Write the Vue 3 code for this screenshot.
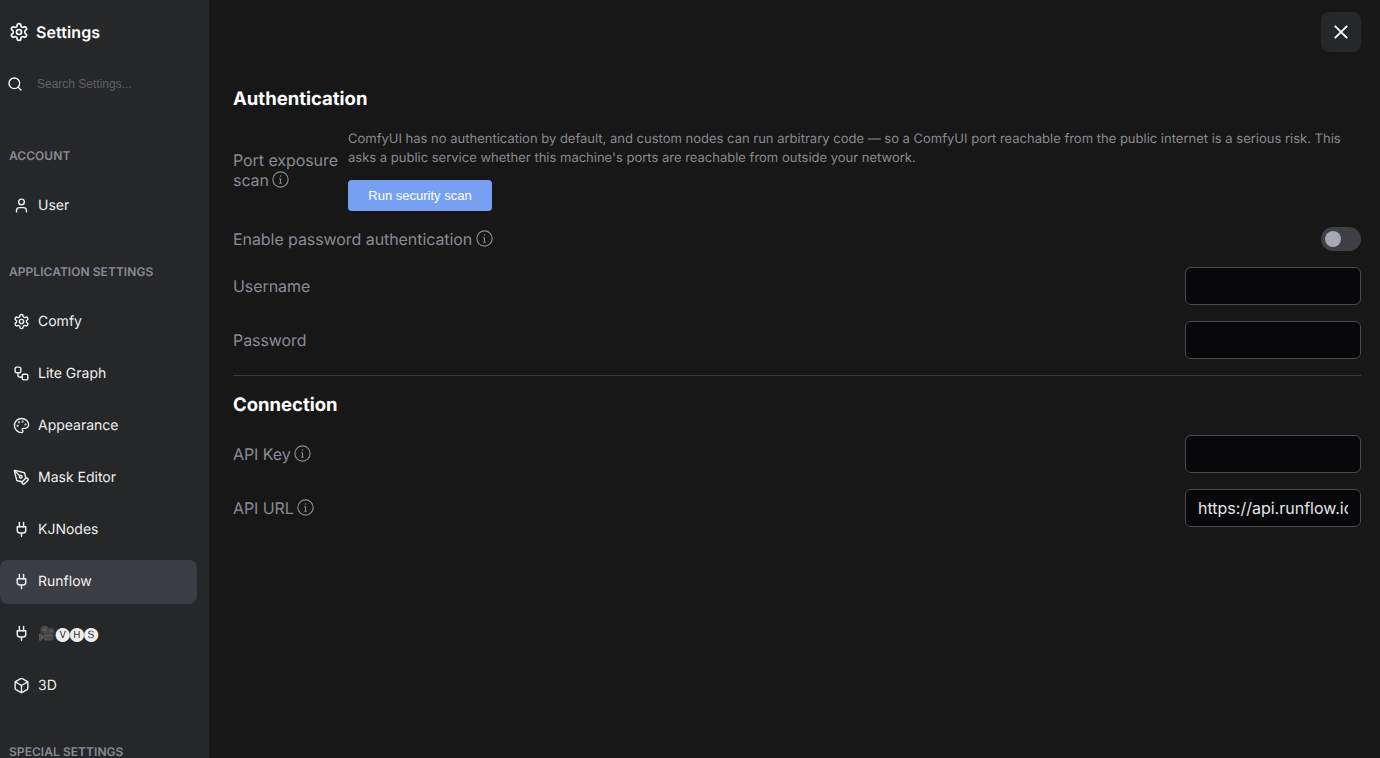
<script setup>
const gear = [
  { t: 'path', d: 'M12.22 2h-.44a2 2 0 0 0-2 2v.18a2 2 0 0 1-1 1.73l-.43.25a2 2 0 0 1-2 0l-.15-.08a2 2 0 0 0-2.73.73l-.22.38a2 2 0 0 0 .73 2.73l.15.1a2 2 0 0 1 1 1.72v.51a2 2 0 0 1-1 1.74l-.15.09a2 2 0 0 0-.73 2.73l.22.38a2 2 0 0 0 2.73.73l.15-.08a2 2 0 0 1 2 0l.43.25a2 2 0 0 1 1 1.73V20a2 2 0 0 0 2 2h.44a2 2 0 0 0 2-2v-.18a2 2 0 0 1 1-1.73l.43-.25a2 2 0 0 1 2 0l.15.08a2 2 0 0 0 2.73-.73l.22-.39a2 2 0 0 0-.73-2.73l-.15-.08a2 2 0 0 1-1-1.74v-.5a2 2 0 0 1 1-1.74l.15-.09a2 2 0 0 0 .73-2.73l-.22-.38a2 2 0 0 0-2.73-.73l-.15.08a2 2 0 0 1-2 0l-.43-.25a2 2 0 0 1-1-1.73V4a2 2 0 0 0-2-2z' },
  { t: 'circle', cx: 12, cy: 12, r: 3 }
]
const plug = [
  { t: 'path', d: 'M12 22v-5' }, { t: 'path', d: 'M9 8V2' }, { t: 'path', d: 'M15 8V2' },
  { t: 'path', d: 'M18 8v5a4 4 0 0 1-4 4h-4a4 4 0 0 1-4-4V8Z' }
]
const icons = {
  gear, plug,
  user: [{ t: 'path', d: 'M19 21v-2a4 4 0 0 0-4-4H9a4 4 0 0 0-4 4v2' }, { t: 'circle', cx: 12, cy: 7, r: 4 }],
  workflow: [
    { t: 'rect', x: 3, y: 3, width: 8, height: 8, rx: 2 },
    { t: 'path', d: 'M7 11v4a2 2 0 0 0 2 2h4' },
    { t: 'rect', x: 13, y: 13, width: 8, height: 8, rx: 2 }
  ],
  palette: [
    { t: 'path', d: 'M12 22a1 1 0 0 1 0-20 10 9 0 0 1 10 9 5 5 0 0 1-5 5h-2.25a1.75 1.75 0 0 0-1.4 2.8l.3.4a1.75 1.75 0 0 1-1.4 2.8z' },
    { t: 'circle', cx: 13.5, cy: 6.5, r: 0.5 }, { t: 'circle', cx: 17.5, cy: 10.5, r: 0.5 },
    { t: 'circle', cx: 6.5, cy: 12.5, r: 0.5 }, { t: 'circle', cx: 8.5, cy: 7.5, r: 0.5 }
  ],
  pen: [
    { t: 'path', d: 'M15.707 21.293a1 1 0 0 1-1.414 0l-1.586-1.586a1 1 0 0 1 0-1.414l5.586-5.586a1 1 0 0 1 1.414 0l1.586 1.586a1 1 0 0 1 0 1.414z' },
    { t: 'path', d: 'm18 13-1.375-6.874a1 1 0 0 0-.746-.776L3.235 2.028a1 1 0 0 0-1.207 1.207L5.35 15.879a1 1 0 0 0 .776.746L13 18' },
    { t: 'path', d: 'm2.3 2.3 7.286 7.286' },
    { t: 'circle', cx: 11, cy: 11, r: 2 }
  ],
  box: [
    { t: 'path', d: 'M21 8a2 2 0 0 0-1-1.73l-7-4a2 2 0 0 0-2 0l-7 4A2 2 0 0 0 3 8v8a2 2 0 0 0 1 1.73l7 4a2 2 0 0 0 2 0l7-4A2 2 0 0 0 21 16Z' },
    { t: 'path', d: 'm3.3 7 8.7 5 8.7-5' },
    { t: 'path', d: 'M12 22V12' }
  ],
  search: [{ t: 'circle', cx: 11, cy: 11, r: 8 }, { t: 'path', d: 'm21 21-4.3-4.3' }]
}
const groups = [
  { title: 'Account', items: [{ label: 'User', icon: 'user' }] },
  {
    title: 'Application Settings',
    items: [
      { label: 'Comfy', icon: 'gear' },
      { label: 'Lite Graph', icon: 'workflow' },
      { label: 'Appearance', icon: 'palette' },
      { label: 'Mask Editor', icon: 'pen' },
      { label: 'KJNodes', icon: 'plug' },
      { label: 'Runflow', icon: 'plug', active: true },
      { label: '🎥🅥🅗🅢', icon: 'plug' },
      { label: '3D', icon: 'box' }
    ]
  },
  { title: 'Special Settings', items: [] }
]
</script>

<template>
  <div class="dialog">
    <aside class="sidebar">
      <div class="title-row">
        <svg class="lucide title-icon" viewBox="0 0 24 24">
          <component :is="s.t" v-for="(s, i) in icons.gear" :key="i" v-bind="s" />
        </svg>
        <span class="title">Settings</span>
      </div>
      <div class="search">
        <svg class="lucide search-icon" viewBox="0 0 24 24">
          <component :is="s.t" v-for="(s, i) in icons.search" :key="i" v-bind="s" />
        </svg>
        <input class="search-input" type="text" placeholder="Search Settings..." />
      </div>
      <nav class="nav">
        <section v-for="g in groups" :key="g.title" class="group">
          <h3 class="group-title">{{ g.title }}</h3>
          <a v-for="item in g.items" :key="item.label" class="item" :class="{ active: item.active }">
            <svg class="lucide item-icon" viewBox="0 0 24 24">
              <component :is="s.t" v-for="(s, i) in icons[item.icon]" :key="i" v-bind="s" />
            </svg>
            <span class="item-label">{{ item.label }}</span>
          </a>
        </section>
      </nav>
    </aside>

    <main class="main">
      <div class="topbar">
        <button class="close" aria-label="Close">
          <svg class="close-icon" viewBox="0 0 16 16"><path d="M2.3 2.3l11.4 11.4M13.7 2.3L2.3 13.7" /></svg>
        </button>
      </div>

      <section class="panel">
        <h2 class="heading">Authentication</h2>
        <div class="row port-row">
          <div class="label port-label">
            Port exposure scan
            <svg class="info" viewBox="0 0 16 16"><circle cx="8" cy="8" r="7.2" /><path d="M8 7.2v4.3M6.9 7.2H8M6.8 11.5h2.4" /><circle class="dot" cx="8" cy="4.7" r=".7" /></svg>
          </div>
          <div class="scan">
            <p class="desc">ComfyUI has no authentication by default, and custom nodes can run arbitrary code — so a ComfyUI port reachable from the public internet is a serious risk. This asks a public service whether this machine's ports are reachable from outside your network.</p>
            <button class="primary">Run security scan</button>
          </div>
        </div>
        <div class="row between">
          <div class="label">
            Enable password authentication
            <svg class="info" viewBox="0 0 16 16"><circle cx="8" cy="8" r="7.2" /><path d="M8 7.2v4.3M6.9 7.2H8M6.8 11.5h2.4" /><circle class="dot" cx="8" cy="4.7" r=".7" /></svg>
          </div>
          <div class="toggle"><span class="knob"></span></div>
        </div>
        <div class="row between">
          <div class="label">Username</div>
          <input class="field" type="text" />
        </div>
        <div class="row between">
          <div class="label">Password</div>
          <input class="field" type="password" />
        </div>
        <hr class="divider" />
        <h2 class="heading">Connection</h2>
        <div class="row between">
          <div class="label">
            API Key
            <svg class="info" viewBox="0 0 16 16"><circle cx="8" cy="8" r="7.2" /><path d="M8 7.2v4.3M6.9 7.2H8M6.8 11.5h2.4" /><circle class="dot" cx="8" cy="4.7" r=".7" /></svg>
          </div>
          <input class="field" type="password" />
        </div>
        <div class="row between">
          <div class="label">
            API URL
            <svg class="info" viewBox="0 0 16 16"><circle cx="8" cy="8" r="7.2" /><path d="M8 7.2v4.3M6.9 7.2H8M6.8 11.5h2.4" /><circle class="dot" cx="8" cy="4.7" r=".7" /></svg>
          </div>
          <input class="field" type="text" value="https://api.runflow.io" />
        </div>
      </section>
    </main>
  </div>
</template>

<style>
html, body { margin: 0; height: 100%; overflow: hidden; background: #171718; }
</style>

<style scoped>
.dialog {
  display: flex;
  height: 758px;
  overflow: hidden;
  font-family: Inter, sans-serif;
  text-rendering: geometricPrecision;
  background: #171718;
  color: #fff;
}
.sidebar {
  width: 209px;
  flex: none;
  box-sizing: border-box;
  background: #262729;
  overflow: hidden;
}
.lucide {
  fill: none;
  stroke: currentColor;
  stroke-width: 2;
  stroke-linecap: round;
  stroke-linejoin: round;
  flex: none;
}
.title-row {
  display: flex;
  align-items: center;
  gap: 7px;
  height: 24px;
  padding: 20px 0 0 9px;
}
.title-icon { width: 20px; height: 20px; }
.title { font-size: 16px; font-weight: 600; line-height: 24px; letter-spacing: .1px; }
.search {
  display: flex;
  align-items: center;
  gap: 14px;
  height: 32px;
  margin-top: 24px;
  padding-left: 7px;
}
.search-icon { width: 16px; height: 16px; }
.search-input {
  flex: 1;
  min-width: 0;
  padding: 0;
  border: 0;
  outline: 0;
  background: transparent;
  color: #fff;
  font: 12px "Liberation Sans", sans-serif;
}
.search-input::placeholder { color: #606068; opacity: 1; }
.nav { padding-right: 12px; margin-top: 46px; }
.group-title {
  margin: 0 0 18px 9px;
  font-size: 12px;
  line-height: 20px;
  font-weight: 600;
  text-transform: uppercase;
  letter-spacing: .05px;
  color: #8a8a93;
}
.group { margin-bottom: 34px; }
.item {
  display: flex;
  align-items: center;
  gap: 8px;
  height: 44px;
  padding-left: 13px;
  margin-bottom: 8px;
  border-radius: 8px;
  font-size: 14px;
  color: #f0f0f0;
}
.item-label { margin-top: -2px; }
.item:last-child { margin-bottom: 0; }
.item.active { background: #3c3d42; }
.item-icon { width: 17px; height: 17px; margin-top: -1px; }

.main { flex: 1; min-width: 0; padding: 12px 19px 0 24px; }
.topbar { display: flex; justify-content: flex-end; height: 40px; }
.close {
  width: 40px;
  height: 40px;
  display: flex;
  align-items: center;
  justify-content: center;
  padding: 0;
  border: 0;
  border-radius: 8px;
  background: #262729;
}
.close-icon { width: 16px; height: 16px; fill: none; stroke: #fff; stroke-width: 1.8; stroke-linecap: round; }
.panel { margin-top: 35px; display: flex; flex-direction: column; }
.heading { margin: 1px 0 19px; font-size: 18.5px; line-height: 22px; font-weight: 700; }
.row { display: flex; align-items: center; gap: 10px; margin-bottom: 16px; }
.port-row { gap: 5px; }
.between { justify-content: space-between; }
.label { font-size: 16px; line-height: 20px; letter-spacing: -.07px; color: #8a8a93; }
.port-label { flex: 0 0 110px; }
.info { width: 17px; height: 17px; margin-left: -1px; vertical-align: -2px; fill: none; stroke: #8a8a93; stroke-width: 1.1; }
.info .dot { fill: #8a8a93; stroke: none; }
.scan { flex: 1; min-width: 0; }
.desc { margin: 1px 0 12px; font-size: 13px; line-height: 19px; color: #8a8a8f; }
.primary {
  display: block;
  width: 144px;
  height: 31px;
  padding: 0;
  border: 0;
  border-radius: 4px;
  background: #78a0f2;
  color: #fff;
  font: 13px "Liberation Sans", sans-serif;
}
.toggle {
  width: 40px;
  height: 24px;
  box-sizing: border-box;
  padding: 4px;
  border-radius: 12px;
  background: #3f3f46;
  display: flex;
  align-items: center;
}
.knob { width: 16px; height: 16px; border-radius: 50%; background: #a8a8b2; }
.field {
  width: 176px;
  height: 38px;
  box-sizing: border-box;
  padding: 0 12px;
  border: 1px solid #4a4a50;
  border-radius: 6px;
  outline: 0;
  background: #08080b;
  color: #e5e5e5;
  font: 16px Inter, sans-serif;
}
.divider { width: 100%; margin: 0 0 17px; border: 0; border-top: 1px solid #3c3c40; }
</style>
